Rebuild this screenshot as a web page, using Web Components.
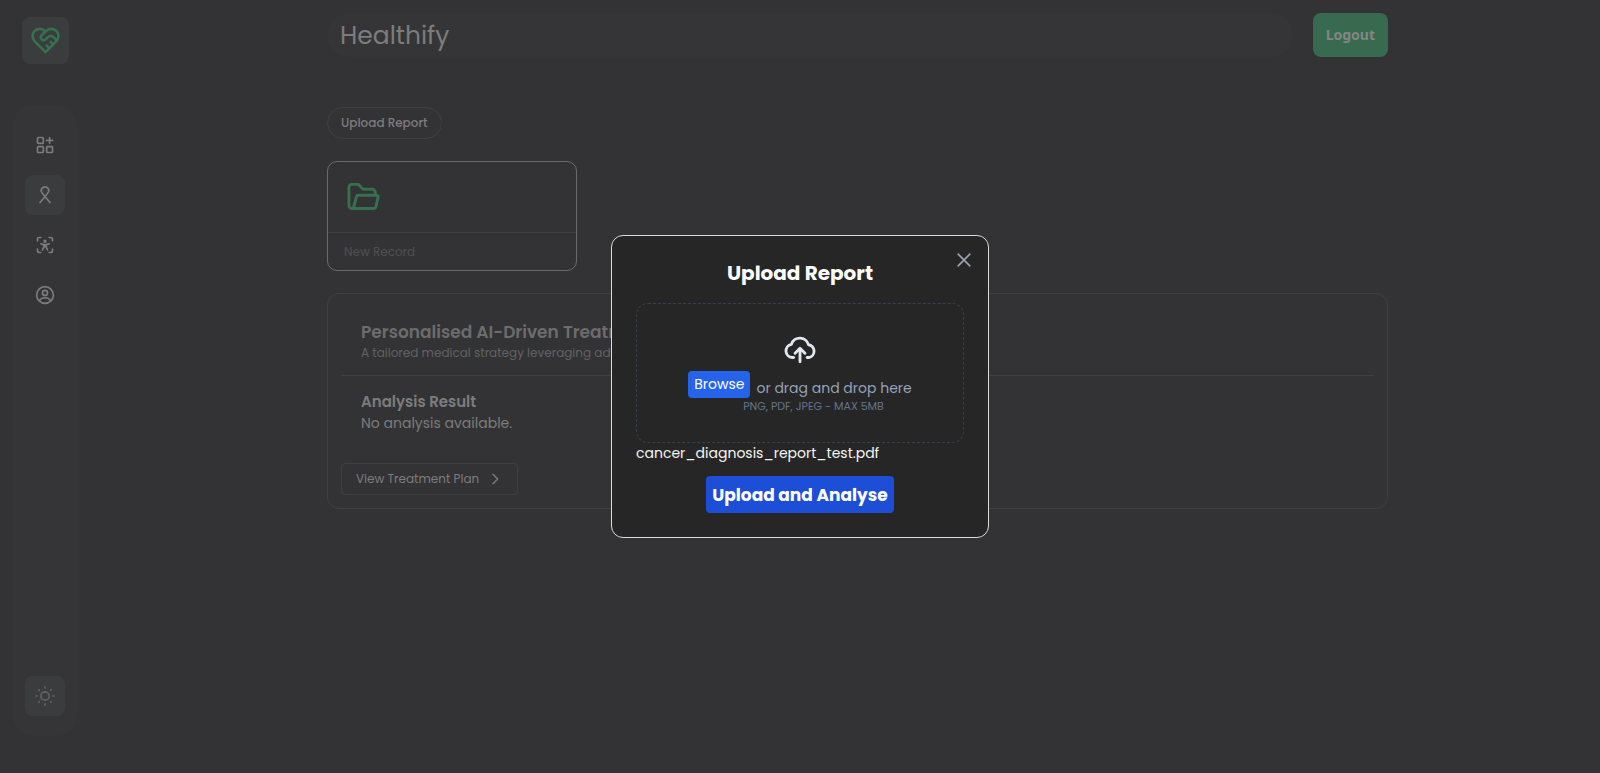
<!DOCTYPE html>
<html lang="en">
<head>
<meta charset="utf-8">
<meta name="viewport" content="width=device-width, initial-scale=1">
<title>Healthify</title>
<style>
  :root {
    --page: #333335;
    --surface: #353537;
    --raised: #3a3c3e;
    --line: #3f3f41;
    --text: #7c7c7c;
    --muted: #616163;
    --green: #37704f;
  }

  body {
    margin: 0;
    min-height: 100vh;
    background: var(--page);
    color: var(--text);
    font-family: Poppins, Inter, "Open Sans", sans-serif;
    font-size: 14px;
    line-height: 20px;
  }
</style>
</head>
<body>
<health-app></health-app>

<script>
const ICONS = {
  heart: `<path d="M19 14c1.5-1.5 3-3.2 3-5.5A5.5 5.5 0 0 0 16.500 3c-1.800 0-3 .5-4.500 2-1.500-1.500-2.700-2-4.500-2A5.500 5.500 0 0 0 2 8.500c0 2.300 1.500 4 3 5.500l7 7Z"/><path d="M12 5 9.040 7.960a2.200 2.200 0 0 0 0 3.080c.820.820 2.130.850 3 .070l2.070-1.900a2.820 2.820 0 0 1 3.790 0l2.960 2.660"/><path d="m18 15-2-2"/><path d="m15 18-2-2"/>`,
  grid: `<rect x="3" y="3" width="7" height="7" rx="1"/><rect x="3" y="14" width="7" height="7" rx="1"/><rect x="14" y="14" width="7" height="7" rx="1"/><path d="M14 6.500h7M17.500 3v7"/>`,
  ribbon: `<path d="M6 21s9.300-10.700 10.400-13.200a4.300 4.300 0 0 0-1.700-4.600 5 5 0 0 0-5.400 0 4.300 4.300 0 0 0-1.700 4.600C8.700 10.300 18 21 18 21"/>`,
  scan: `<path d="M3 7V5a2 2 0 0 1 2-2h2M17 3h2a2 2 0 0 1 2 2v2M21 17v2a2 2 0 0 1-2 2h-2M7 21H5a2 2 0 0 1-2-2v-2"/><circle cx="12" cy="7.500" r="1" fill="currentColor"/><path d="M7 10.500l3.500 1h3l3.500-1M10.500 11.500v3L9 18M13.500 11.500v3L15 18M10.500 14h3M12 11.500V14"/>`,
  user: `<circle cx="12" cy="12" r="10"/><circle cx="12" cy="9.500" r="3"/><path d="M5.500 18.500c1.500-2.300 3.700-3.200 6.500-3.200s5 .9 6.500 3.200"/>`,
  sun: `<circle cx="12" cy="12" r="5"/><path d="M12 1v1.500M12 21.500V23M1 12h1.500M21.500 12H23M4.500 4.500l.7.700M18.800 18.800l.7.700M4.500 19.500l.7-.7M18.800 5.200l.7-.7"/>`,
  folder: `<path d="M5 19.500l2.300-8.300A1 1 0 0 1 8.300 10.500H21a1 1 0 0 1 1 1.300l-1.500 6.500a1.600 1.600 0 0 1-1.600 1.200H4a2 2 0 0 1-2-2V5a2 2 0 0 1 2-2h4.500l3.200 3.300H18a2 2 0 0 1 2 2v2"/>`,
  cloud: `<path d="M7.500 18H6.500a4.700 4.700 0 0 1-.6-9.300A6.300 6.300 0 0 1 18 9a4.600 4.600 0 0 1 .5 9h-1.500"/><path d="M12 21v-9M8.500 15l3.500-3.500 3.500 3.500"/>`,
  close: `<path d="M5 5l14 14M19 5 5 19"/>`,
  chevron: `<path d="m9 5 7 7-7 7"/>`
};

class HealthIcon extends HTMLElement {
  connectedCallback() {
    const size = this.getAttribute("size") || 20;
    const stroke = this.getAttribute("stroke") || 2;
    this.attachShadow({ mode: "open" }).innerHTML = `
      <style>
        :host { display: inline-flex; flex: none; }
        svg { display: block; }
      </style>
      <svg width="${size}" height="${size}" viewBox="0 0 24 24" fill="none" stroke="currentColor"
        stroke-width="${stroke}" stroke-linecap="round" stroke-linejoin="round" aria-hidden="true">
        ${ICONS[this.getAttribute("name")]}
      </svg>
    `;
  }
}

class HealthSidebar extends HTMLElement {
  connectedCallback() {
    this.attachShadow({ mode: "open" }).innerHTML = `
      <style>
        :host {
          display: flex;
          flex-direction: column;
          flex: none;
          gap: 41px;
          width: 64px;
          padding: 17px 38px 37px 13px;
          box-sizing: content-box;
        }
        .logo {
          display: grid;
          place-items: center;
          align-self: center;
          width: 47px;
          height: 47px;
          border-radius: 8px;
          background: var(--raised);
          color: var(--green);
        }
        nav {
          display: flex;
          flex-direction: column;
          align-items: center;
          flex: 1;
          gap: 10px;
          padding: 20px 0;
          border-radius: 20px;
          background: var(--surface);
        }
        button {
          display: grid;
          place-items: center;
          width: 40px;
          height: 40px;
          padding: 0;
          border: 0;
          border-radius: 8px;
          background: none;
          color: var(--text);
        }
        .active, .theme { background: var(--raised); }
        .theme { margin-top: auto; color: var(--muted); }
      </style>
      <a class="logo" href="#" aria-label="Home"><health-icon name="heart" size="31"></health-icon></a>
      <nav>
        <button aria-label="Dashboard"><health-icon name="grid"></health-icon></button>
        <button class="active" aria-label="Records"><health-icon name="ribbon"></health-icon></button>
        <button aria-label="Screening"><health-icon name="scan"></health-icon></button>
        <button aria-label="Profile"><health-icon name="user"></health-icon></button>
        <button class="theme" aria-label="Theme"><health-icon name="sun"></health-icon></button>
      </nav>
    `;
  }
}

class HealthNavbar extends HTMLElement {
  connectedCallback() {
    this.attachShadow({ mode: "open" }).innerHTML = `
      <style>
        :host { display: flex; gap: 20px; }
        h1 {
          flex: 1;
          margin: 0;
          padding: 2px 13px 0;
          border-radius: 22px;
          background: var(--surface);
          font-size: 25px;
          font-weight: 400;
          line-height: 42px;
        }
        button {
          height: 44px;
          padding: 0 13px;
          border: 0;
          border-radius: 8px;
          background: #386a50;
          color: #858585;
          font: 700 14px/20px "Noto Sans", sans-serif;
        }
      </style>
      <h1><slot></slot></h1>
      <button>Logout</button>
    `;
  }
}

class RecordCard extends HTMLElement {
  connectedCallback() {
    this.attachShadow({ mode: "open" }).innerHTML = `
      <style>
        :host {
          display: block;
          box-sizing: border-box;
          width: 250px;
          border: 1px solid #6a6a6c;
          border-radius: 10px;
        }
        .icon { padding: 18px 18px 17px; color: var(--green); }
        health-icon { display: flex; }
        p {
          margin: 0;
          padding: 9px 16px;
          border-top: 1px solid var(--line);
          color: #505052;
          font-size: 12px;
          line-height: 19px;
        }
      </style>
      <div class="icon"><health-icon name="folder" size="35"></health-icon></div>
      <p><slot></slot></p>
    `;
  }
}

class TreatmentPanel extends HTMLElement {
  connectedCallback() {
    this.attachShadow({ mode: "open" }).innerHTML = `
      <style>
        :host {
          display: block;
          padding: 27px 13px 13px;
          border: 1px solid var(--line);
          border-radius: 12px;
        }
        h2, h3, p { margin: 0; }
        header {
          padding: 0 20px 12px;
          border-bottom: 1px solid var(--line);
        }
        h2 { font-size: 17px; font-weight: 600; line-height: 22px; color: #6c6c6e; }
        header p { font-size: 12px; line-height: 20px; color: var(--muted); }
        section { padding: 15px 20px 30px; }
        h3 { font-size: 15px; font-weight: 600; line-height: 22px; }
        button {
          display: flex;
          align-items: center;
          gap: 8px;
          height: 32px;
          padding: 0 14px;
          border: 1px solid var(--line);
          border-radius: 4px;
          background: none;
          color: inherit;
          font: inherit;
          font-size: 12px;
        }
      </style>
      <header>
        <h2>Personalised AI-Driven Treatment Plan</h2>
        <p>A tailored medical strategy leveraging advanced AI insights</p>
      </header>
      <section>
        <h3>Analysis Result</h3>
        <p>No analysis available.</p>
      </section>
      <button>View Treatment Plan <health-icon name="chevron" size="16"></health-icon></button>
    `;
  }
}

class UploadModal extends HTMLElement {
  connectedCallback() {
    this.attachShadow({ mode: "open" }).innerHTML = `
      <style>
        :host {
          position: fixed;
          inset: 0;
          display: grid;
          place-items: center;
        }
        .modal {
          position: relative;
          box-sizing: border-box;
          width: 378px;
          padding: 24px;
          border: 1px solid #dcdcdc;
          border-radius: 12px;
          background: #262626;
          color: #fff;
        }
        button { font-family: inherit; border: 0; color: #fff; }
        .close {
          position: absolute;
          top: 14px;
          right: 14px;
          padding: 0;
          background: none;
          color: #9ca3af;
        }
        h2 {
          margin: 0 0 16px;
          font-size: 20px;
          font-weight: 700;
          line-height: 27px;
          text-align: center;
        }
        .drop {
          display: flex;
          flex-direction: column;
          align-items: center;
          padding: 28px 12px;
          border: 1px dashed #334155;
          border-radius: 12px;
          color: #94a3b8;
        }
        .drop health-icon { margin-bottom: 5px; color: #e2e8f0; }
        .row { display: flex; align-items: flex-end; gap: 6px; }
        .browse {
          height: 27px;
          padding: 0 6px;
          border-radius: 4px;
          background: #2563eb;
          font-size: 14px;
        }
        .hint {
          display: block;
          padding-left: 27px;
          color: #64748b;
          font-size: 11px;
          line-height: 16px;
        }
        .file { margin: 0 0 13px; color: #f5f5f5; }
        .submit {
          display: block;
          height: 37px;
          margin: 0 auto;
          padding: 0 6px;
          border-radius: 4px;
          background: #1d4ed8;
          font-size: 17px;
          font-weight: 700;
        }
      </style>
      <div class="modal" role="dialog" aria-modal="true" aria-labelledby="title">
        <button class="close" aria-label="Close"><health-icon name="close" size="20"></health-icon></button>
        <h2 id="title">Upload Report</h2>
        <div class="drop">
          <health-icon name="cloud" size="34"></health-icon>
          <div class="row"><button class="browse">Browse</button><span>or drag and drop here</span></div>
          <small class="hint">PNG, PDF, JPEG - MAX 5MB</small>
        </div>
        <p class="file"><slot></slot></p>
        <button class="submit">Upload and Analyse</button>
      </div>
    `;
  }
}

class HealthApp extends HTMLElement {
  connectedCallback() {
    this.attachShadow({ mode: "open" }).innerHTML = `
      <style>
        :host { display: flex; min-height: 100vh; }
        main {
          flex: 1;
          max-width: 1061px;
          margin: 0 auto;
          padding-top: 13px;
        }
        .upload {
          display: block;
          height: 32px;
          margin: 50px 0 22px;
          padding: 0 13px;
          border: 1px solid var(--line);
          border-radius: 16px;
          background: none;
          color: inherit;
          font: inherit;
          font-size: 12px;
          font-weight: 500;
        }
        treatment-panel { margin-top: 22px; }
      </style>
      <health-sidebar></health-sidebar>
      <main>
        <health-navbar>Healthify</health-navbar>
        <button class="upload">Upload Report</button>
        <record-card>New Record</record-card>
        <treatment-panel></treatment-panel>
      </main>
      <upload-modal>cancer_diagnosis_report_test.pdf</upload-modal>
    `;
  }
}

customElements.define("health-icon", HealthIcon);
customElements.define("health-sidebar", HealthSidebar);
customElements.define("health-navbar", HealthNavbar);
customElements.define("record-card", RecordCard);
customElements.define("treatment-panel", TreatmentPanel);
customElements.define("upload-modal", UploadModal);
customElements.define("health-app", HealthApp);
</script>
</body>
</html>
